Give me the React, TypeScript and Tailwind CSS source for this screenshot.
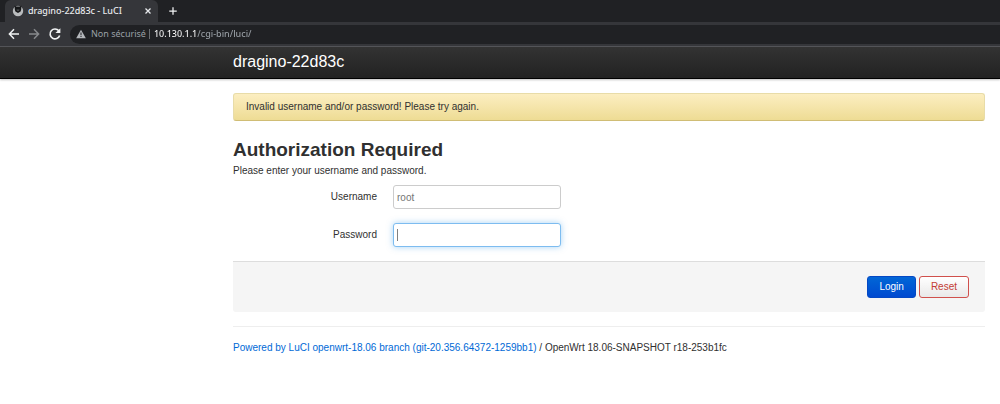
import { useState, type ReactNode } from "react";

function Favicon() {
  return (
    <svg viewBox="0 0 12 12" className="size-3 shrink-0" aria-hidden="true">
      <circle cx="6" cy="6" r="5.2" fill="#b9bbbd" />
      <path d="M2.6.4 4.2 1.4h3.6L9.4.4l-.2 4-.6 2L6 8 3.4 6.4l-.6-2z" fill="#17181a" />
      <path d="M4.4 4.4h3.2L6.8 6H5.2z" fill="#4a4c4f" />
    </svg>
  );
}

function Stroke({ d, className }: { d: string; className: string }) {
  return (
    <svg viewBox="0 0 12 12" className={className} fill="none" stroke="currentColor" strokeWidth="1.5" aria-hidden="true">
      <path d={d} />
    </svg>
  );
}

function BrowserChrome() {
  const [url, setUrl] = useState("10.130.1.1/cgi-bin/luci/");

  return (
    <div className="bg-[#202124] font-['Noto_Sans',sans-serif] text-[9px] leading-4">
      <div className="flex h-[22px] items-end pl-[5px]">
        <div className="flex h-[22px] w-[153px] items-center gap-1 rounded-t-md bg-[#35363a] pr-[5px] pl-[7px] text-[#e8eaed]">
          <Favicon />
          <span className="flex-1 truncate font-medium">dragino-22d83c - LuCI</span>
          <button aria-label="Close tab">
            <Stroke d="M3 3l6 6M9 3l-6 6" className="size-2.5" />
          </button>
        </div>
        <button aria-label="New tab" className="mb-[6px] ml-[10px] text-[#f1f3f4]">
          <Stroke d="M6 1.5v9M1.5 6h9" className="size-2.5" />
        </button>
      </div>

      <div className="flex h-[25px] items-center border-b border-[#55565a] bg-[#35363a] pl-2">
        <button aria-label="Back" className="text-[#f1f3f4]">
          <Stroke d="M11 6H1.5M6 1.3 1.4 6 6 10.7" className="size-3" />
        </button>
        <button aria-label="Forward" className="ml-2 text-[#87898c]">
          <Stroke d="M1 6h9.5M6 1.3 10.6 6 6 10.7" className="size-3" />
        </button>
        <button aria-label="Reload" className="ml-2 text-[#f1f3f4]">
          <svg viewBox="0 0 12 12" className="size-3.5" aria-hidden="true">
            <path d="M9.3 3.3A4.2 4.2 0 1 0 10 7.2" fill="none" stroke="currentColor" strokeWidth="1.4" />
            <path d="M10.6 1v4.2H6.4z" fill="currentColor" />
          </svg>
        </button>
        <div className="ml-2 flex h-[19px] flex-1 items-center rounded-l-full bg-[#202124] pl-1.5">
          <button className="flex items-center gap-[5px] text-[#9aa0a6]">
            <svg viewBox="0 0 12 12" className="size-2.5" aria-hidden="true">
              <path d="M6 1 11.8 11H.2z" fill="#b4b7bb" />
              <path d="M6 4.2v3.2M6 8.3v1.3" stroke="#202124" strokeWidth="1.2" />
            </svg>
            Non sécurisé
          </button>
          <span className="mr-1 ml-[3px] h-2.5 w-px bg-[#6b6e72]" />
          <input
            aria-label="Address"
            value={url}
            onChange={(e) => setUrl(e.target.value)}
            className="min-w-0 flex-1 bg-linear-to-r from-white from-[43px] to-[#9aa0a6] to-[43px] bg-clip-text font-medium text-transparent outline-none"
          />
        </div>
      </div>
    </div>
  );
}

function Field({ id, label, children }: { id: string; label: string; children: ReactNode }) {
  return (
    <div className="flex items-center gap-4">
      <label htmlFor={id} className="w-36 text-right">{label}</label>
      <div className="relative">{children}</div>
    </div>
  );
}

export default function App() {
  const [password, setPassword] = useState("");

  return (
    <div className="min-h-screen bg-white font-['Liberation_Sans',sans-serif] text-[10px] leading-4 text-[#303030]">
      <BrowserChrome />

      <header className="h-8 border-b border-black bg-linear-to-b from-[#333] to-[#222] pl-[233px] shadow-[0_1px_2px_rgba(0,0,0,0.25)]">
        <a href="#" className="text-base leading-[29px] text-white">dragino-22d83c</a>
      </header>

      <main className="mr-[15px] ml-[233px] pt-[14px]">
        <div className="rounded-[3px] border border-[#e8dca8] border-b-[#d0bd75] bg-linear-to-b from-[#fceec1] to-[#eedc94] px-3 py-[5px]">
          Invalid username and/or password! Please try again.
        </div>

        <form onSubmit={(e) => e.preventDefault()} onReset={() => setPassword("")}>
          <h2 className="mt-4 text-[19px] leading-[26px] font-bold">Authorization Required</h2>
          <p>Please enter your username and password.</p>

          <div className="mt-1.5 space-y-[14px]">
            <Field id="username" label="Username">
              <input
                id="username"
                placeholder="root"
                className="block h-6 w-[168px] rounded-[3px] border border-[#ccc] bg-white px-[3px] outline-none placeholder:text-[#757575]"
              />
            </Field>
            <Field id="password" label="Password">
              <input
                id="password"
                type="password"
                value={password}
                onChange={(e) => setPassword(e.target.value)}
                className="block h-6 w-[168px] rounded-[3px] border border-[#7dbcf0] bg-white px-[3px] shadow-[0_0_6px_rgba(82,168,236,0.5)] outline-none"
              />
              {!password && <span className="pointer-events-none absolute top-1.5 left-1 h-3 w-px bg-[#808080]" />}
            </Field>
          </div>

          <div className="mt-[14px] flex justify-end gap-[3px] rounded-b-[3px] border-t border-[#ddd] bg-[#f5f5f5] px-4 py-[14px]">
            <button type="submit" className="h-[22px] rounded-[3px] border border-[#0448c4] bg-linear-to-b from-[#0366d6] to-[#0049d0] px-[11px] text-white">
              Login
            </button>
            <button type="reset" className="h-[22px] rounded-[3px] border border-[#d0504c] bg-linear-to-b from-white to-[#e9e9e9] px-[11px] text-[#c43c35]">
              Reset
            </button>
          </div>
        </form>

        <footer className="mt-[14px] border-t border-[#eee] pt-[13px]">
          <a href="#" className="text-[#0069d6]">Powered by LuCI openwrt-18.06 branch (git-20.356.64372-1259bb1)</a> / OpenWrt 18.06-SNAPSHOT r18-253b1fc
        </footer>
      </main>
    </div>
  );
}
